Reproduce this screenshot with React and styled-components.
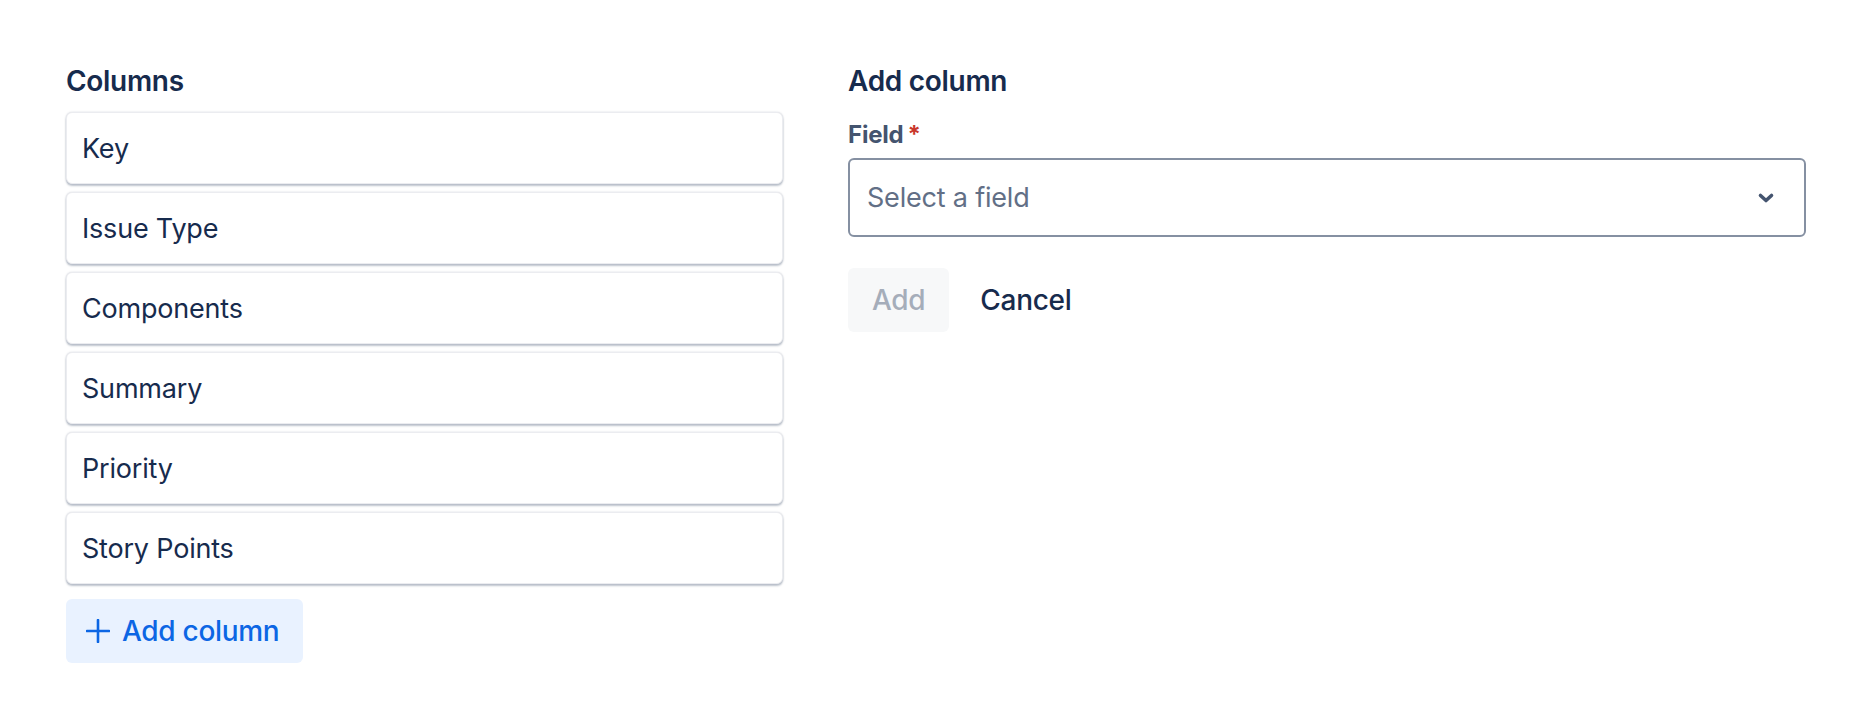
import React from "react";
import styled, { createGlobalStyle } from "styled-components";

const GlobalStyle = createGlobalStyle`
  html, body {
    margin: 0;
    padding: 0;
    background: #ffffff;
  }
  body {
    font-family: Inter, "Noto Sans", "Liberation Sans", sans-serif;
    color: #172b4d;
    -webkit-font-smoothing: antialiased;
  }
`;

const columns = ["Key", "Issue Type", "Components", "Summary", "Priority", "Story Points"];

function PlusIcon() {
  return (
    <svg width="24" height="24" viewBox="0 0 24 24" fill="none">
      <path d="M12 1v22M1 12h22" stroke="currentColor" strokeWidth="2.6" strokeLinecap="round" />
    </svg>
  );
}

function ChevronDown() {
  return (
    <svg width="20" height="20" viewBox="0 0 20 20" fill="none">
      <path d="M4.5 7.5L10 12.5L15.5 7.5" stroke="#44546f" strokeWidth="3.6" strokeLinecap="round" strokeLinejoin="round" />
    </svg>
  );
}

export default function App() {
  return (
    <>
      <GlobalStyle />
      <Page>
        <Panel width="717px">
          <Heading>Columns</Heading>
          <List>
            {columns.map((c) => (
              <Item key={c}>{c}</Item>
            ))}
          </List>
          <AddColumnButton>
            <PlusIcon />
            <span>Add column</span>
          </AddColumnButton>
        </Panel>
        <Panel width="958px">
          <Heading>Add column</Heading>
          <Label>
            Field<Required>*</Required>
          </Label>
          <Select>
            <Placeholder>Select a field</Placeholder>
            <ChevronDown />
          </Select>
          <Actions>
            <Button disabled>Add</Button>
            <Button subtle>Cancel</Button>
          </Actions>
        </Panel>
      </Page>
    </>
  );
}

const Page = styled.div`
  display: flex;
  gap: 65px;
  padding: 61px 0 0 66px;
`;

const Panel = styled.div`
  width: ${(p) => p.width};
  display: flex;
  flex-direction: column;
`;

const Heading = styled.h2`
  margin: 0;
  font-size: 28px;
  line-height: 40px;
  font-weight: 600;
  color: #172b4d;
  letter-spacing: -0.3px;
`;

const List = styled.div`
  display: flex;
  flex-direction: column;
  gap: 8px;
  margin-top: 11px;
`;

const Item = styled.div`
  height: 72px;
  box-sizing: border-box;
  display: flex;
  align-items: center;
  padding: 0 16px 0 15px;
  background: #ffffff;
  border: 1px solid #ebecf0;
  border-radius: 6px;
  box-shadow: 0 2px 2px rgba(9, 30, 66, 0.25), 0 0 2px rgba(9, 30, 66, 0.18);
  font-size: 27px;
  color: #172b4d;
  letter-spacing: -0.2px;
`;

const AddColumnButton = styled.button`
  align-self: flex-start;
  margin-top: 15px;
  height: 64px;
  width: 237px;
  display: flex;
  align-items: center;
  gap: 12px;
  padding: 0 0 0 20px;
  border: none;
  border-radius: 6px;
  background: #e9f2ff;
  color: #0c66e4;
  font-family: inherit;
  font-size: 28px;
  font-weight: 500;
  letter-spacing: -0.3px;
  cursor: pointer;
`;

const Label = styled.label`
  margin-top: 18px;
  display: flex;
  align-items: flex-start;
  gap: 4px;
  font-size: 24px;
  line-height: 32px;
  font-weight: 700;
  color: #44546f;
  letter-spacing: -0.2px;
`;

const Required = styled.span`
  color: #c9372c;
  font-size: 24px;
`;

const Select = styled.div`
  margin-top: 7px;
  height: 79px;
  box-sizing: border-box;
  display: flex;
  align-items: center;
  justify-content: space-between;
  padding: 0 28px 0 17px;
  border: 2px solid #8590a2;
  border-radius: 6px;
  background: #ffffff;
`;

const Placeholder = styled.span`
  font-size: 27px;
  color: #626f86;
  letter-spacing: -0.2px;
`;

const Actions = styled.div`
  display: flex;
  gap: 7px;
  margin-top: 31px;
`;

const Button = styled.button`
  height: 64px;
  padding: 0 24px;
  border: none;
  border-radius: 6px;
  font-family: inherit;
  font-size: 28px;
  font-weight: 500;
  letter-spacing: -0.3px;
  background: ${(p) => (p.disabled ? "#f7f8f9" : "transparent")};
  color: ${(p) => (p.disabled ? "#a5adba" : "#172b4d")};
  cursor: ${(p) => (p.disabled ? "not-allowed" : "pointer")};
`;
